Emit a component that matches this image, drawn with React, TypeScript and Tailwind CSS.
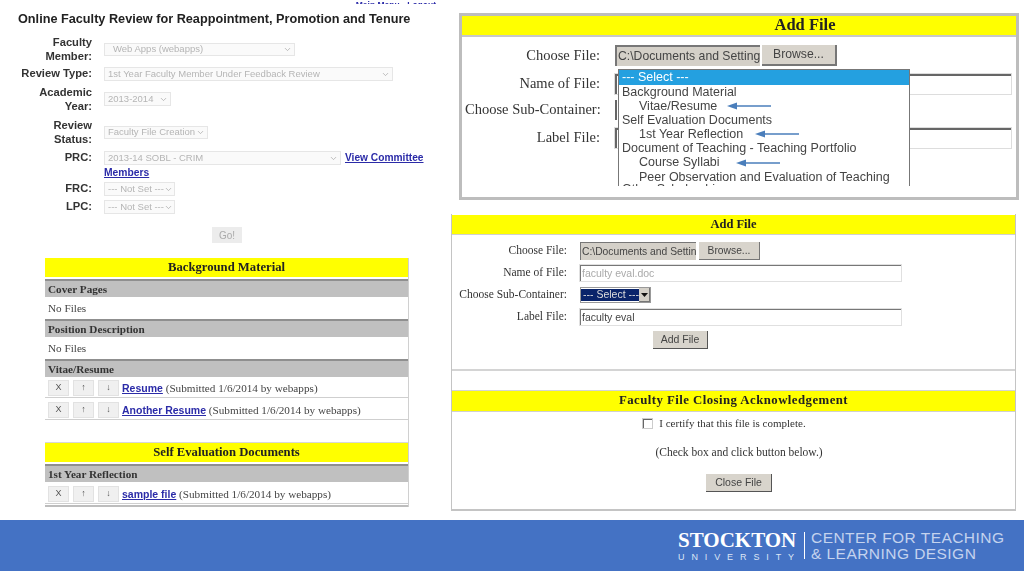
import { ChevronDown } from "lucide-react";

const serif = "font-['Liberation_Serif',serif]";

function Label({ children }: { children: React.ReactNode }) {
  return (
    <div className="w-[92px] shrink-0 text-right text-[11.2px] leading-[13.5px] font-bold text-[#333]">
      {children}
    </div>
  );
}

function FadedSelect({ text, className }: { text: string; className: string }) {
  return (
    <div
      className={`flex items-center justify-between border border-[#e6e6e6] bg-[#fafafa] pl-[3px] pr-[2px] text-[9.5px] whitespace-nowrap text-[#b5b5b5] ${className}`}
    >
      <span>{text}</span>
      <ChevronDown size={9} className="shrink-0 text-[#aaa]" />
    </div>
  );
}

function SmallBtn({ children }: { children: React.ReactNode }) {
  return (
    <div className="flex h-[16px] w-[21px] items-center justify-center border border-[#e2e2e2] bg-[#f0f0f0] font-['Liberation_Sans',sans-serif] text-[9px] text-[#555]">
      {children}
    </div>
  );
}

function FileRow({ name, gap }: { name: string; gap: string }) {
  return (
    <div className={`flex h-[19px] items-center gap-[4px] bg-white pl-[3px] ${gap}`}>
      <SmallBtn>X</SmallBtn>
      <SmallBtn>↑</SmallBtn>
      <SmallBtn>↓</SmallBtn>
      <span className="ml-[-1px] text-[11.2px] text-[#444]">
        <a className="font-['Liberation_Sans',sans-serif] text-[10.5px] font-bold text-[#2b2ba8] underline">{name}</a>{" "}
        (Submitted 1/6/2014 by webapps)
      </span>
    </div>
  );
}

function GrayRow({ children, gap }: { children: React.ReactNode; gap: string }) {
  return (
    <div className={`flex h-[18px] items-center border-t-2 border-[#8f8f8f] bg-[#c0c0c0] pl-[3px] text-[11.2px] font-bold text-[#333] ${gap}`}>
      {children}
    </div>
  );
}

function YellowBar({ children, className }: { children: React.ReactNode; className: string }) {
  return (
    <div className={`flex items-center justify-center bg-[#ffff00] font-bold text-[#222] ${className}`}>
      {children}
    </div>
  );
}

function Arrow({ className }: { className: string }) {
  return (
    <svg width="44" height="8" viewBox="0 0 44 8" className={className}>
      <path d="M8 4H44" stroke="#4a7ebb" strokeWidth="1.6" />
      <path d="M0 4L10 0.5V7.5Z" fill="#4a7ebb" />
    </svg>
  );
}

function LeftColumn() {
  return (
    <div className="w-[451px] shrink-0 font-['Liberation_Sans',sans-serif] blur-[0.4px]">
      <div className="flex h-[4px] items-end justify-end overflow-hidden pr-[15px] text-[8.5px] leading-[9px] font-bold text-[#2b2ba8] underline">
        <span className="translate-y-[6px]">Main Menu - Logout</span>
      </div>
      <div className="flex h-[32px] items-center pl-[18px] text-[12.7px] font-bold text-[#222]">
        Online Faculty Review for Reappointment, Promotion and Tenure
      </div>

      <div className="flex h-[30px] gap-[12px]">
        <Label>Faculty<br />Member:</Label>
        <FadedSelect text="Web Apps (webapps)" className="mt-[7px] h-[13px] w-[191px] pl-[8px]" />
      </div>
      <div className="flex h-[20px] items-start gap-[12px] pt-[1px]">
        <Label>Review Type:</Label>
        <FadedSelect text="1st Year Faculty Member Under Feedback Review" className="h-[14px] w-[289px]" />
      </div>
      <div className="flex h-[32px] gap-[12px]">
        <Label>Academic<br />Year:</Label>
        <FadedSelect text="2013-2014" className="mt-[6px] h-[14px] w-[67px]" />
      </div>
      <div className="flex h-[33px] gap-[12px] pt-[1px]">
        <Label>Review<br />Status:</Label>
        <FadedSelect text="Faculty File Creation" className="mt-[7px] h-[13px] w-[104px]" />
      </div>
      <div className="flex h-[15px] items-start gap-[12px]">
        <Label>PRC:</Label>
        <FadedSelect text="2013-14 SOBL - CRIM" className="h-[14px] w-[237px]" />
        <a className="-ml-[8px] text-[10.2px] leading-[14px] font-bold whitespace-nowrap text-[#2b2ba8] underline">
          View Committee
        </a>
      </div>
      <div className="h-[16px] pl-[104px] text-[10.3px] leading-[14px] font-bold text-[#2b2ba8] underline">
        Members
      </div>
      <div className="flex h-[18px] items-start gap-[12px]">
        <Label>FRC:</Label>
        <FadedSelect text="--- Not Set ---" className="h-[14px] w-[71px]" />
      </div>
      <div className="flex h-[27px] items-start gap-[12px]">
        <Label>LPC:</Label>
        <FadedSelect text="--- Not Set ---" className="h-[14px] w-[71px]" />
      </div>
      <div className="ml-[212px] flex h-[16px] w-[30px] items-center justify-center bg-[#ececec] text-[10px] text-[#aaa]">
        Go!
      </div>

      <div className={`mt-[15px] ml-[45px] h-[249px] w-[364px] overflow-hidden border-r border-[#d0d0d0] ${serif}`}>
        <YellowBar className="h-[19px] text-[12.7px]">Background Material</YellowBar>
        <GrayRow gap="mt-[2px]">Cover Pages</GrayRow>
        <div className="mt-[2px] flex h-[19px] items-center bg-white pl-[3px] text-[11.2px] text-[#444]">No Files</div>
        <GrayRow gap="mt-[1px]">Position Description</GrayRow>
        <div className="mt-[2px] flex h-[18px] items-center bg-white pl-[3px] text-[11.2px] text-[#444]">No Files</div>
        <GrayRow gap="mt-[2px]">Vitae/Resume</GrayRow>
        <FileRow name="Resume" gap="mt-[2px] border-b border-[#cfcfcf]" />
        <FileRow name="Another Resume" gap="mt-[3px] border-b border-[#cfcfcf]" />
        <div className="h-[23px] border-b border-[#d8d8d8] bg-white" />
        <YellowBar className="h-[19px] text-[12.7px]">Self Evaluation Documents</YellowBar>
        <GrayRow gap="mt-[2px]">1st Year Reflection</GrayRow>
        <FileRow name="sample file" gap="mt-[3px] border-b border-[#cfcfcf]" />
        <div className="mt-[1px] h-[2px] bg-[#bdbdbd]" />
      </div>
    </div>
  );
}

function TopLabel({ children }: { children: React.ReactNode }) {
  return (
    <div className="w-[135px] shrink-0 text-right text-[14.5px] whitespace-nowrap text-[#333]">
      {children}
    </div>
  );
}

function DropItem({ text, indent, arrow }: { text: string; indent?: boolean; arrow?: string }) {
  return (
    <div className={`flex h-[14.2px] items-center whitespace-nowrap ${indent ? "pl-[20px]" : "pl-[3px]"}`}>
      {text}
      {arrow && <Arrow className={arrow} />}
    </div>
  );
}

function TopPanel() {
  return (
    <div className={`relative ml-[8px] mt-[13px] h-[187px] w-[560px] border-[3px] border-[#bdbdbd] bg-white blur-[0.3px] ${serif}`}>
      <YellowBar className="h-[19px] pl-[132px] text-[16.5px]">Add File</YellowBar>
      <div className="h-[2px] bg-[#c8c8c8]" />
      <div className="flex flex-col pl-[3px]">
        <div className="flex h-[29px] items-end gap-[15px]">
          <div className="flex h-[21px] items-center">
            <TopLabel>Choose File:</TopLabel>
          </div>
          <div className="flex h-[21px] gap-[2px] font-['Liberation_Sans',sans-serif] text-[12.2px] text-[#444]">
            <div className="flex w-[145px] items-center overflow-hidden border-t-2 border-l-2 border-[#777] bg-[#d4d0c8] pl-[1px] whitespace-nowrap">
              C:\Documents and Settings
            </div>
            <div className="flex w-[75px] items-center justify-center border-r-2 border-b-2 border-[#777] bg-[#d8d4cc]">
              Browse...
            </div>
          </div>
        </div>
        <div className="mt-[7px] flex h-[22px] items-center gap-[15px]">
          <TopLabel>Name of File:</TopLabel>
          <div className="h-[20px] w-[396px] border-t-2 border-l-2 border-[#666] bg-white outline outline-[#ddd]" />
        </div>
        <div className="mt-[4px] flex h-[22px] items-center gap-[15px]">
          <TopLabel>Choose Sub-Container:</TopLabel>
          <div className="h-[20px] w-[20px] border-l-2 border-[#666]" />
        </div>
        <div className="mt-[6px] flex h-[22px] items-center gap-[15px]">
          <TopLabel>Label File:</TopLabel>
          <div className="h-[20px] w-[396px] border-t-2 border-l-2 border-[#666] bg-white outline outline-[#ddd]" />
        </div>
      </div>
      <div className="absolute top-[53px] left-[156px] h-[117px] w-[292px] overflow-hidden border-x border-t border-[#777] bg-white font-['Liberation_Sans',sans-serif] text-[12.5px] text-[#444]">
        <div className="flex h-[14.8px] items-center bg-[#24a0e0] pl-[3px] text-white">--- Select ---</div>
        <DropItem text="Background Material" />
        <DropItem text="Vitae/Resume" indent arrow="ml-[10px]" />
        <DropItem text="Self Evaluation Documents" />
        <DropItem text="1st Year Reflection" indent arrow="ml-[12px]" />
        <DropItem text="Document of Teaching - Teaching Portfolio" />
        <DropItem text="Course Syllabi" indent arrow="ml-[16px]" />
        <DropItem text="Peer Observation and Evaluation of Teaching" indent />
        <div className="-mt-[1.5px]">
          <DropItem text="Other Scholarship" />
        </div>
      </div>
    </div>
  );
}

function BottomRow({ label, children, className }: { label: string; children: React.ReactNode; className: string }) {
  return (
    <div className={`flex items-center gap-[13px] ${className}`}>
      <div className="w-[115px] shrink-0 text-right text-[11.5px] whitespace-nowrap text-[#333]">{label}</div>
      {children}
    </div>
  );
}

function BottomPanel() {
  return (
    <div className={`mt-[14px] flex h-[297px] w-[565px] flex-col border-x border-b-2 border-[#c4c4c4] bg-white blur-[0.3px] ${serif}`}>
      <YellowBar className="mt-[1px] h-[20px] border-b border-[#d0d0d0] text-[12.5px]">Add File</YellowBar>
      <div className="h-[136px] border-b-2 border-[#d4d4d4] font-['Liberation_Sans',sans-serif]">
        <BottomRow label="Choose File:" className={`mt-[7px] h-[18px] ${serif}`}>
          <div className="flex h-[18px] gap-[3px] font-['Liberation_Sans',sans-serif] text-[10.3px] text-[#444]">
            <div className="flex w-[116px] items-center overflow-hidden border-t border-l border-[#777] bg-[#d4d0c8] pl-[1px] whitespace-nowrap">
              C:\Documents and Settings
            </div>
            <div className="flex w-[61px] items-center justify-center border-r border-b border-[#777] bg-[#d8d4cc]">
              Browse...
            </div>
          </div>
        </BottomRow>
        <BottomRow label="Name of File:" className={`mt-[5px] h-[16px] ${serif}`}>
          <div className="flex h-[16px] w-[321px] items-center border-t border-l border-[#777] bg-white pl-[1px] font-['Liberation_Sans',sans-serif] text-[10.5px] text-[#aaa] outline outline-[#e0e0e0]">
            faculty eval.doc
          </div>
        </BottomRow>
        <BottomRow label="Choose Sub-Container:" className={`mt-[6px] h-[16px] ${serif}`}>
          <div className="flex h-[16px] w-[71px] items-center border border-[#999] bg-white font-['Liberation_Sans',sans-serif] text-[10.5px]">
            <div className="flex h-[12px] flex-1 items-center bg-[#0a246a] pl-[2px] whitespace-nowrap text-[#ddd]">
              --- Select ---
            </div>
            <div className="flex h-[14px] w-[12px] items-center justify-center border-r border-b border-[#777] bg-[#d4d0c8]">
              <svg width="7" height="4" viewBox="0 0 7 4"><path d="M0 0H7L3.5 4Z" fill="#111" /></svg>
            </div>
          </div>
        </BottomRow>
        <BottomRow label="Label File:" className={`mt-[6px] h-[16px] ${serif}`}>
          <div className="flex h-[16px] w-[321px] items-center border-t border-l border-[#777] bg-white pl-[1px] font-['Liberation_Sans',sans-serif] text-[10.5px] text-[#444] outline outline-[#e0e0e0]">
            faculty eval
          </div>
        </BottomRow>
        <div className="mt-[6px] ml-[201px] flex h-[18px] w-[55px] items-center justify-center border-r border-b border-[#555] bg-[#d8d4cc] text-[10.5px] text-[#444]">
          Add File
        </div>
      </div>
      <div className="h-[20px] border-b border-[#d4d4d4]" />
      <YellowBar className="h-[21px] border-b border-[#d0d0d0] text-[12.8px] tracking-[0.45px]">
        Faculty File Closing Acknowledgement
      </YellowBar>
      <div className="flex flex-1 flex-col items-center text-[11.5px] text-[#333]">
        <div className="mt-[5px] mr-[18px] flex h-[13px] items-center gap-[7px] text-[11px]">
          <div className="h-[9px] w-[9px] border-t border-l border-[#666] bg-white outline outline-[#ccc]" />
          I certify that this file is complete.
        </div>
        <div className="mt-[16px] ml-[11px] h-[13px] leading-[13px]">(Check box and click button below.)</div>
        <div className="mt-[15px] ml-[11px] flex h-[18px] w-[66px] items-center justify-center border-r border-b border-[#555] bg-[#d8d4cc] font-['Liberation_Sans',sans-serif] text-[10.5px] text-[#444]">
          Close File
        </div>
      </div>
    </div>
  );
}

function Footer() {
  return (
    <div className="flex h-[51px] items-center bg-[#4472c4] pl-[678px] text-white">
      <div className="flex w-[120px] flex-col">
        <div className="font-['Liberation_Serif',serif] text-[21px] leading-[20px] font-bold whitespace-nowrap">STOCKTON</div>
        <div className="mt-[2px] font-['Liberation_Sans',sans-serif] text-[9px] leading-[10px] tracking-[6.9px] whitespace-nowrap text-[#dde6f5]">
          UNIVERSITY
        </div>
      </div>
      <div className="ml-[6px] h-[27px] w-px bg-white" />
      <div className="ml-[6px] font-['Liberation_Sans',sans-serif] text-[15.5px] leading-[16px] font-light tracking-[0.45px] whitespace-nowrap text-[#c4d3ee]">
        <div>CENTER FOR TEACHING</div>
        <div>&amp; LEARNING DESIGN</div>
      </div>
    </div>
  );
}

export default function App() {
  return (
    <div className="h-[576px] w-[1024px] overflow-hidden bg-white">
      <div className="flex h-[520px]">
        <LeftColumn />
        <div className="flex flex-col">
          <TopPanel />
          <BottomPanel />
        </div>
      </div>
      <Footer />
    </div>
  );
}
